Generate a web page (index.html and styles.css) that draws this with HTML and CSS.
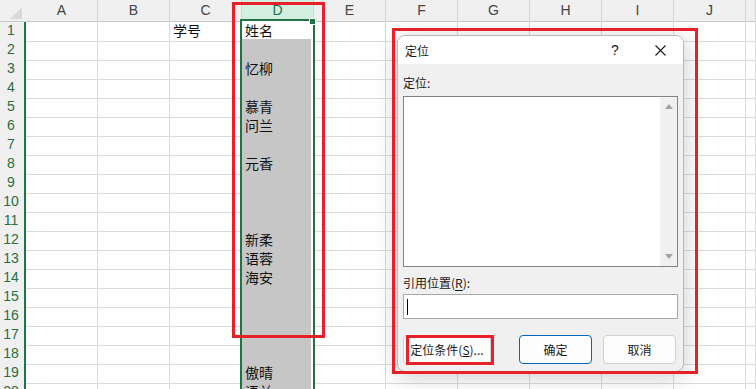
FILE: index.html
```html
<!DOCTYPE html>
<html lang="zh-CN">
<head>
  <meta charset="UTF-8" />
  <title>定位</title>
  <link rel="stylesheet" href="styles.css">
</head>
<body>

  <div class="sheet">
    <div class="row head">
      <div class="corner"></div>
      <div class="ch">A</div><div class="ch">B</div><div class="ch">C</div><div class="ch sel">D</div><div class="ch">E</div>
      <div class="ch">F</div><div class="ch">G</div><div class="ch">H</div><div class="ch">I</div><div class="ch">J</div><div class="ch"></div>
    </div>
    <div class="row"><div class="rh">1</div><div class="c"></div><div class="c"></div><div class="c">学号</div><div class="c d act">姓名</div><div class="c"></div><div class="c"></div><div class="c"></div><div class="c"></div><div class="c"></div><div class="c"></div><div class="c"></div></div>
    <div class="row"><div class="rh">2</div><div class="c"></div><div class="c"></div><div class="c"></div><div class="c d"></div><div class="c"></div><div class="c"></div><div class="c"></div><div class="c"></div><div class="c"></div><div class="c"></div><div class="c"></div></div>
    <div class="row"><div class="rh">3</div><div class="c"></div><div class="c"></div><div class="c"></div><div class="c d">忆柳</div><div class="c"></div><div class="c"></div><div class="c"></div><div class="c"></div><div class="c"></div><div class="c"></div><div class="c"></div></div>
    <div class="row"><div class="rh">4</div><div class="c"></div><div class="c"></div><div class="c"></div><div class="c d"></div><div class="c"></div><div class="c"></div><div class="c"></div><div class="c"></div><div class="c"></div><div class="c"></div><div class="c"></div></div>
    <div class="row"><div class="rh">5</div><div class="c"></div><div class="c"></div><div class="c"></div><div class="c d">慕青</div><div class="c"></div><div class="c"></div><div class="c"></div><div class="c"></div><div class="c"></div><div class="c"></div><div class="c"></div></div>
    <div class="row"><div class="rh">6</div><div class="c"></div><div class="c"></div><div class="c"></div><div class="c d">问兰</div><div class="c"></div><div class="c"></div><div class="c"></div><div class="c"></div><div class="c"></div><div class="c"></div><div class="c"></div></div>
    <div class="row"><div class="rh">7</div><div class="c"></div><div class="c"></div><div class="c"></div><div class="c d"></div><div class="c"></div><div class="c"></div><div class="c"></div><div class="c"></div><div class="c"></div><div class="c"></div><div class="c"></div></div>
    <div class="row"><div class="rh">8</div><div class="c"></div><div class="c"></div><div class="c"></div><div class="c d">元香</div><div class="c"></div><div class="c"></div><div class="c"></div><div class="c"></div><div class="c"></div><div class="c"></div><div class="c"></div></div>
    <div class="row"><div class="rh">9</div><div class="c"></div><div class="c"></div><div class="c"></div><div class="c d"></div><div class="c"></div><div class="c"></div><div class="c"></div><div class="c"></div><div class="c"></div><div class="c"></div><div class="c"></div></div>
    <div class="row"><div class="rh">10</div><div class="c"></div><div class="c"></div><div class="c"></div><div class="c d"></div><div class="c"></div><div class="c"></div><div class="c"></div><div class="c"></div><div class="c"></div><div class="c"></div><div class="c"></div></div>
    <div class="row"><div class="rh">11</div><div class="c"></div><div class="c"></div><div class="c"></div><div class="c d"></div><div class="c"></div><div class="c"></div><div class="c"></div><div class="c"></div><div class="c"></div><div class="c"></div><div class="c"></div></div>
    <div class="row"><div class="rh">12</div><div class="c"></div><div class="c"></div><div class="c"></div><div class="c d">新柔</div><div class="c"></div><div class="c"></div><div class="c"></div><div class="c"></div><div class="c"></div><div class="c"></div><div class="c"></div></div>
    <div class="row"><div class="rh">13</div><div class="c"></div><div class="c"></div><div class="c"></div><div class="c d">语蓉</div><div class="c"></div><div class="c"></div><div class="c"></div><div class="c"></div><div class="c"></div><div class="c"></div><div class="c"></div></div>
    <div class="row"><div class="rh">14</div><div class="c"></div><div class="c"></div><div class="c"></div><div class="c d">海安</div><div class="c"></div><div class="c"></div><div class="c"></div><div class="c"></div><div class="c"></div><div class="c"></div><div class="c"></div></div>
    <div class="row"><div class="rh">15</div><div class="c"></div><div class="c"></div><div class="c"></div><div class="c d"></div><div class="c"></div><div class="c"></div><div class="c"></div><div class="c"></div><div class="c"></div><div class="c"></div><div class="c"></div></div>
    <div class="row"><div class="rh">16</div><div class="c"></div><div class="c"></div><div class="c"></div><div class="c d"></div><div class="c"></div><div class="c"></div><div class="c"></div><div class="c"></div><div class="c"></div><div class="c"></div><div class="c"></div></div>
    <div class="row"><div class="rh">17</div><div class="c"></div><div class="c"></div><div class="c"></div><div class="c d"></div><div class="c"></div><div class="c"></div><div class="c"></div><div class="c"></div><div class="c"></div><div class="c"></div><div class="c"></div></div>
    <div class="row"><div class="rh">18</div><div class="c"></div><div class="c"></div><div class="c"></div><div class="c d"></div><div class="c"></div><div class="c"></div><div class="c"></div><div class="c"></div><div class="c"></div><div class="c"></div><div class="c"></div></div>
    <div class="row"><div class="rh">19</div><div class="c"></div><div class="c"></div><div class="c"></div><div class="c d">傲晴</div><div class="c"></div><div class="c"></div><div class="c"></div><div class="c"></div><div class="c"></div><div class="c"></div><div class="c"></div></div>
    <div class="row"><div class="rh">20</div><div class="c"></div><div class="c"></div><div class="c"></div><div class="c d">语兰</div><div class="c"></div><div class="c"></div><div class="c"></div><div class="c"></div><div class="c"></div><div class="c"></div><div class="c"></div></div>

    <!-- column D selection -->
    <div class="selection"><span class="handle"></span></div>
  </div>

  <div class="dialog">
    <div class="dlg-title">
      <span class="dlg-name">定位</span>
      <span class="help">?</span>
      <span class="close">
        <svg width="11" height="11" viewBox="0 0 11 11"><path d="M0.5 0.5 L10.5 10.5 M10.5 0.5 L0.5 10.5" stroke="#1a1a1a" stroke-width="1.1" fill="none"/></svg>
      </span>
    </div>
    <div class="dlg-body">
      <div class="lbl">定位:</div>
      <div class="listbox">
        <div class="list-area"></div>
        <div class="vscroll">
          <span class="tri up"></span>
          <span class="tri down"></span>
        </div>
      </div>
      <div class="lbl ref">引用位置(<u>R</u>):</div>
      <div class="refbox"><span class="caret"></span></div>
      <div class="btns">
        <button class="btn special">定位条件(<u>S</u>)...</button>
        <button class="btn primary">确定</button>
        <button class="btn">取消</button>
      </div>
    </div>
  </div>

  <!-- red annotation boxes -->
  <div class="mark mark-col"></div>
  <div class="mark mark-dlg"></div>
  <div class="mark mark-btn"></div>

</body>
</html>
```

FILE: styles.css
```css
body {
  margin: 0;
  width: 756px;
  height: 389px;
  overflow: hidden;
  position: relative;
  background: #ffffff;
  font-family: "Noto Sans CJK SC", "Liberation Sans", sans-serif;
}

.sheet {
  position: relative;
}

.row {
  display: grid;
  grid-template-columns: 26px repeat(10, 72px) 1fr;
  height: 19px;
}

.row.head {
  height: 20px;
}

.corner,
.ch {
  box-sizing: border-box;
  background: #f0f0f0;
  border-right: 1px solid #d4d4d4;
  border-bottom: 1px solid #c8c8c8;
  font-family: "Liberation Sans", sans-serif;
  font-size: 14px;
  color: #444;
  text-align: center;
  line-height: 21px;
}

.corner {
  position: relative;
  border-right: 2px solid #f0f0f0;
}

.corner::after {
  content: "";
  position: absolute;
  right: 2px;
  bottom: 2px;
  border-left: 12px solid transparent;
  border-bottom: 12px solid #d8d8d8;
}

.ch.sel {
  background: #d3efdf;
  color: #1e7145;
}

.rh {
  box-sizing: border-box;
  background: #f0f0f0;
  border-right: 2px solid #217346;
  border-bottom: 1px solid #d4d4d4;
  font-family: "Liberation Sans", sans-serif;
  font-size: 14px;
  color: #2a6e3f;
  text-align: center;
  padding-right: 2px;
  line-height: 21px;
}

.c {
  box-sizing: border-box;
  border-right: 1px solid #dadada;
  border-bottom: 1px solid #dadada;
  font-size: 14px;
  line-height: 20px;
  padding-left: 3px;
  color: #111;
  white-space: nowrap;
  overflow: hidden;
}

.c.d {
  background: #c6c6c6;
  border-bottom-color: #adadad;
  border-right: 3px solid #ffffff;
}

.c.d.act {
  background: #ffffff;
}

.selection {
  position: absolute;
  left: 240px;
  top: 19px;
  width: 75px;
  height: 380px;
  box-sizing: border-box;
  border: 2px solid #217346;
  border-bottom: none;
}

.handle {
  position: absolute;
  right: -3px;
  top: -3px;
  width: 5px;
  height: 5px;
  background: #217346;
  border: 1px solid #ffffff;
}

/* dialog */
.dialog {
  position: absolute;
  left: 397px;
  top: 35px;
  width: 287px;
  height: 337px;
  box-sizing: border-box;
  border: 1px solid #b9b9b9;
  border-radius: 8px;
  background: #f0f0f0;
  box-shadow: 0 4px 22px rgba(0, 0, 0, 0.22);
  overflow: hidden;
  font-size: 12px;
  color: #1a1a1a;
}

.dlg-title {
  height: 28px;
  background: #ffffff;
  display: flex;
  align-items: center;
  padding: 0 17px 0 7px;
}

.help {
  margin-left: auto;
  width: 12px;
  text-align: center;
  font-family: "Liberation Sans", sans-serif;
  font-size: 14px;
}

.close {
  margin-left: 34px;
  display: flex;
}

.dlg-body {
  padding: 11px 5px 0;
}

.lbl {
  line-height: 16px;
}

.lbl.ref {
  margin-top: 8px;
}

.lbl u {
  text-underline-offset: 2px;
}

.listbox {
  margin-top: 5px;
  height: 171px;
  box-sizing: border-box;
  border: 1px solid #838383;
  background: #ffffff;
  display: flex;
}

.list-area {
  flex: 1;
}

.vscroll {
  width: 17px;
  background: #f0f0f0;
  display: flex;
  flex-direction: column;
  justify-content: space-between;
  align-items: center;
  padding: 7px 0;
}

.tri {
  width: 0;
  height: 0;
  border-left: 4px solid transparent;
  border-right: 4px solid transparent;
}

.tri.up {
  border-bottom: 5px solid #a3a3a3;
}

.tri.down {
  border-top: 5px solid #a3a3a3;
}

.refbox {
  margin-top: 3px;
  height: 25px;
  box-sizing: border-box;
  border: 1px solid #a8a8a8;
  background: #ffffff;
  display: flex;
  align-items: center;
  padding-left: 3px;
}

.caret {
  width: 1px;
  height: 16px;
  background: #000;
}

.btns {
  margin-top: 16px;
  display: flex;
  gap: 11px;
  padding-right: 2px;
}

.btn {
  height: 29px;
  width: 73px;
  box-sizing: border-box;
  border: 1px solid #d0d0d0;
  border-radius: 4px;
  background: #fdfdfd;
  font-family: "Noto Sans CJK SC", "Liberation Sans", sans-serif;
  font-size: 12px;
  color: #1a1a1a;
  padding: 0;
}

.btn.special {
  width: 88px;
  margin-right: auto;
}

.btn.primary {
  border-color: #0067c0;
}

/* annotations */
.mark {
  position: absolute;
  box-sizing: border-box;
  border: 3px solid #e8202a;
}

.mark-col {
  left: 232px;
  top: 2px;
  width: 93px;
  height: 336px;
}

.mark-dlg {
  left: 392px;
  top: 28px;
  width: 306px;
  height: 346px;
}

.mark-btn {
  left: 406px;
  top: 335px;
  width: 88px;
  height: 30px;
}
```
